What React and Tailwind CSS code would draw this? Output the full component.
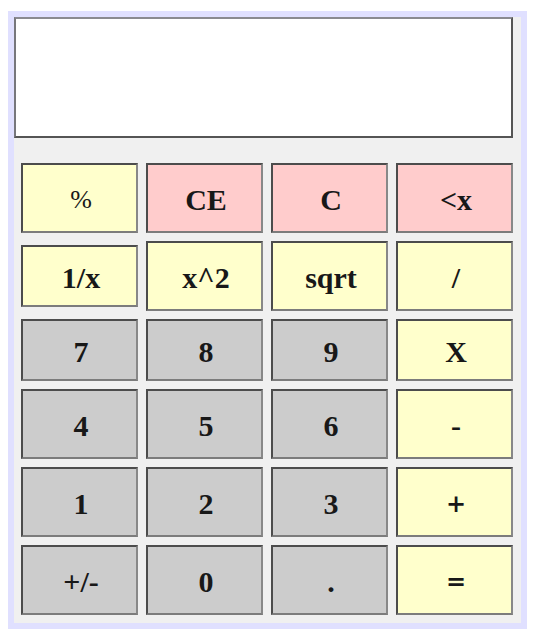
import { useState } from "react";

const TONES = {
  yellow: "bg-[#ffffcc]",
  pink: "bg-[#ffcccc]",
  gray: "bg-[#cccccc]",
};

const SYMBOL = "text-2xl font-bold font-['DejaVu_Serif',serif]";

const KEYS = [
  { label: "%", tone: "yellow", text: "text-[26px] font-normal" },
  { label: "CE", tone: "pink" },
  { label: "C", tone: "pink" },
  { label: "<x", tone: "pink" },
  { label: "1/x", tone: "yellow", size: "h-[62px]" },
  { label: "x^2", tone: "yellow" },
  { label: "sqrt", tone: "yellow" },
  { label: "/", tone: "yellow" },
  { label: "7", tone: "gray", size: "h-[62px]" },
  { label: "8", tone: "gray", size: "h-[62px]" },
  { label: "9", tone: "gray", size: "h-[62px]" },
  { label: "X", tone: "yellow", size: "h-[62px]" },
  { label: "4", tone: "gray" },
  { label: "5", tone: "gray" },
  { label: "6", tone: "gray" },
  { label: "-", tone: "yellow" },
  { label: "1", tone: "gray" },
  { label: "2", tone: "gray" },
  { label: "3", tone: "gray" },
  { label: "+", tone: "yellow", text: SYMBOL },
  { label: "+/-", tone: "gray" },
  { label: "0", tone: "gray" },
  { label: ".", tone: "gray" },
  { label: "=", tone: "yellow", text: SYMBOL },
];

function Key({ label, tone, size = "h-[70px]", text = "text-3xl font-bold", onPress }) {
  return (
    <button
      type="button"
      onClick={() => onPress(label)}
      className={`${size} ${text} ${TONES[tone]} self-center border-2 border-t-[#4c4c4c] border-l-[#4c4c4c] border-r-[#888888] border-b-[#7c7c7c] pt-[3px] pl-[3px] text-center text-[#181818]`}
    >
      {label}
    </button>
  );
}

export default function App() {
  const [value, setValue] = useState("");

  const press = (label) => {
    if (label === "C" || label === "CE") setValue("");
    else if (label === "<x") setValue((v) => v.slice(0, -1));
    else if (/^[0-9.]$/.test(label)) setValue((v) => v + label);
  };

  return (
    <div className="bg-white pt-[11px] pr-[10px] pb-[7px] pl-2 font-['Liberation_Serif',serif]">
      <main className="border-6 border-[#e0e0ff] bg-[#f0f0f0] pr-2 pb-2">
        <input
          type="text"
          aria-label="Display"
          value={value}
          onChange={(e) => setValue(e.target.value)}
          className="block h-[121px] w-full border-2 border-t-[#8a8a90] border-l-[#77777c] border-r-[#555555] border-b-[#555555] bg-white px-3 text-right text-3xl font-bold outline-none"
        />
        <div className="grid grid-cols-4 gap-2 pt-[25px] pl-[7px]">
          {KEYS.map((key) => (
            <Key key={key.label} {...key} onPress={press} />
          ))}
        </div>
      </main>
    </div>
  );
}
